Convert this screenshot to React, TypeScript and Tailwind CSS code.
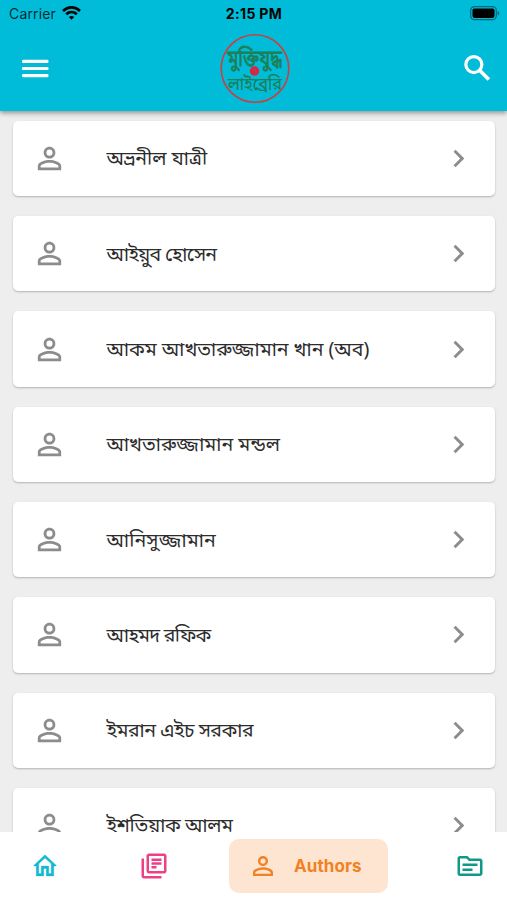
import { MdOutlinePersonOutline, MdChevronRight, MdOutlineLibraryBooks, MdOutlineSource } from "react-icons/md";

const authors = [
  { name: "অভ্রনীল যাত্রী", tracking: "tracking-normal" },
  { name: "আইয়ুব হোসেন", tracking: "tracking-[-0.7px]" },
  { name: "আকম আখতারুজ্জামান খান (অব)", tracking: "tracking-normal" },
  { name: "আখতারুজ্জামান মন্ডল", tracking: "tracking-normal" },
  { name: "আনিসুজ্জামান", tracking: "tracking-[0.15px]" },
  { name: "আহমদ রফিক", tracking: "tracking-[-0.7px]" },
  { name: "ইমরান এইচ সরকার", tracking: "tracking-[-0.45px]" },
  { name: "ইশতিয়াক আলম", tracking: "tracking-[-0.4px]" },
];

function StatusBar() {
  return (
    <div className="grid h-[27px] grid-cols-3 items-center pl-[9px] pr-[7px] text-black">
      <div className="flex items-center gap-[6px] text-[14px] text-black/80">
        <span className="tracking-[0.15px]">Carrier</span>
        <svg width="19" height="15" viewBox="0 0 19 15" fill="none" stroke="#000" strokeWidth="2.7">
          <path d="M1 4.9C6 .2 13 .2 18 4.9" />
          <path d="M4.2 8.3C7.3 5.5 11.7 5.5 14.8 8.3" />
          <path d="M9.5 13.7 6.9 10.9c1.5-1.3 3.7-1.3 5.2 0z" fill="#000" stroke="none" />
        </svg>
      </div>
      <div className="pr-[1px] text-center text-[14px] font-bold tracking-[0.35px]">2:15 PM</div>
      <svg className="justify-self-end" width="30" height="15" viewBox="0 0 30 15">
        <rect x="0.7" y="0.7" width="25.6" height="13" rx="3.6" fill="none" stroke="#000" strokeOpacity=".45" strokeWidth="1.2" />
        <rect x="2.5" y="2.5" width="22" height="9.4" rx="1.8" />
        <path d="M27.7 5v4.5c2-.6 2-3.9 0-4.5z" fillOpacity=".45" />
      </svg>
    </div>
  );
}

function Logo() {
  return (
    <svg className="overflow-visible" width="70" height="70" viewBox="0 0 70 70" fontFamily="'Noto Sans Bengali', 'Noto Sans', sans-serif">
      <circle cx="35" cy="34.5" r="33.8" fill="none" stroke="#c8403f" strokeWidth="1.6" />
      <text x="34.5" y="31.5" textAnchor="middle" fontSize="22" textLength="54" lengthAdjust="spacingAndGlyphs" fill="#1e7f58" stroke="#1e7f58" strokeWidth=".8">মুক্তিযুদ্ধ</text>
      <text x="35" y="55.5" textAnchor="middle" fontSize="18" textLength="54" lengthAdjust="spacingAndGlyphs" fill="#1e7f58" stroke="#1e7f58" strokeWidth=".2">লাইব্রেরি</text>
      <circle cx="34.5" cy="37" r="4.7" fill="#e0223c" />
      <path d="M32.7 35l3 1-1 2 1.8 2" fill="none" stroke="#82566a" strokeWidth="1" />
    </svg>
  );
}

export default function App() {
  return (
    <div className="flex h-[900px] w-[507px] flex-col overflow-hidden bg-[#eeeeee] font-[Inter,sans-serif]">
      <header className="z-10 h-[110.5px] shrink-0 bg-[#00bcd9] shadow-[0_2px_5px_rgba(0,0,0,0.4)]">
        <StatusBar />
        <div className="grid h-[83px] grid-cols-3 items-center pl-[17px] pr-[12px] text-white">
          <svg width="36" height="36" viewBox="0 0 36 36" fill="currentColor">
            <rect x="5" y="8.8" width="26.5" height="3.2" rx="1.2" />
            <rect x="5" y="15.9" width="26.5" height="3.2" rx="1.2" />
            <rect x="5" y="23" width="26.5" height="3.2" rx="1.2" />
          </svg>
          <div className="flex justify-center pr-[1px]"><Logo /></div>
          <svg className="size-[35px] justify-self-end" viewBox="0 0 24 24" fill="none" stroke="currentColor" strokeWidth="2.2">
            <circle cx="9.5" cy="9.3" r="5.5" />
            <path d="M13.6 13.4l6.2 6.2" strokeWidth="2.5" />
          </svg>
        </div>
      </header>
      <main className="flex min-h-0 flex-1 flex-col gap-[20px] overflow-hidden px-[13px] pt-[10.3px]">
        {authors.map(({ name, tracking }) => (
          <div key={name} className="flex h-[75.3px] w-[482px] shrink-0 items-center rounded-[5px] bg-white px-[19px] shadow-[0_1px_2px_rgba(0,0,0,0.25)]">
            <MdOutlinePersonOutline className="size-[35px] text-[#8c8c8c]" />
            <span className={`ml-[39.5px] flex-1 whitespace-nowrap pt-[5px] font-['Noto_Sans_Bengali','Noto_Sans',sans-serif] text-[19.5px] text-[#2c2c2c] ${tracking}`}>{name}</span>
            <MdChevronRight className="size-[35px] text-[#8c8c8c]" />
          </div>
        ))}
      </main>
      <nav className="z-10 flex h-[68px] shrink-0 items-center bg-white pl-[30px]">
        <svg className="size-[30px] text-[#13b8d2]" viewBox="0 0 24 24" fill="currentColor" stroke="currentColor" strokeWidth=".25">
          <path d="M12 5.69l5 4.5V18h-2v-6H9v6H7v-7.81l5-4.5M12 3 3 11.5V12h2v8h6v-6h2v6h6v-8h2v-.5L12 3z" />
        </svg>
        <MdOutlineLibraryBooks className="ml-[79px] size-[30px] text-[#ee4088]" />
        <div className="ml-[60px] flex h-[54px] w-[159px] items-center rounded-[10px] bg-[#fde5d2] pl-[19px] text-[#f18121]">
          <MdOutlinePersonOutline className="size-[30px]" />
          <span className="ml-[16px] pt-[1px] text-[17px] font-bold tracking-[0.1px]">Authors</span>
        </div>
        <MdOutlineSource className="ml-[67px] size-[30px] text-[#119987]" />
      </nav>
    </div>
  );
}
